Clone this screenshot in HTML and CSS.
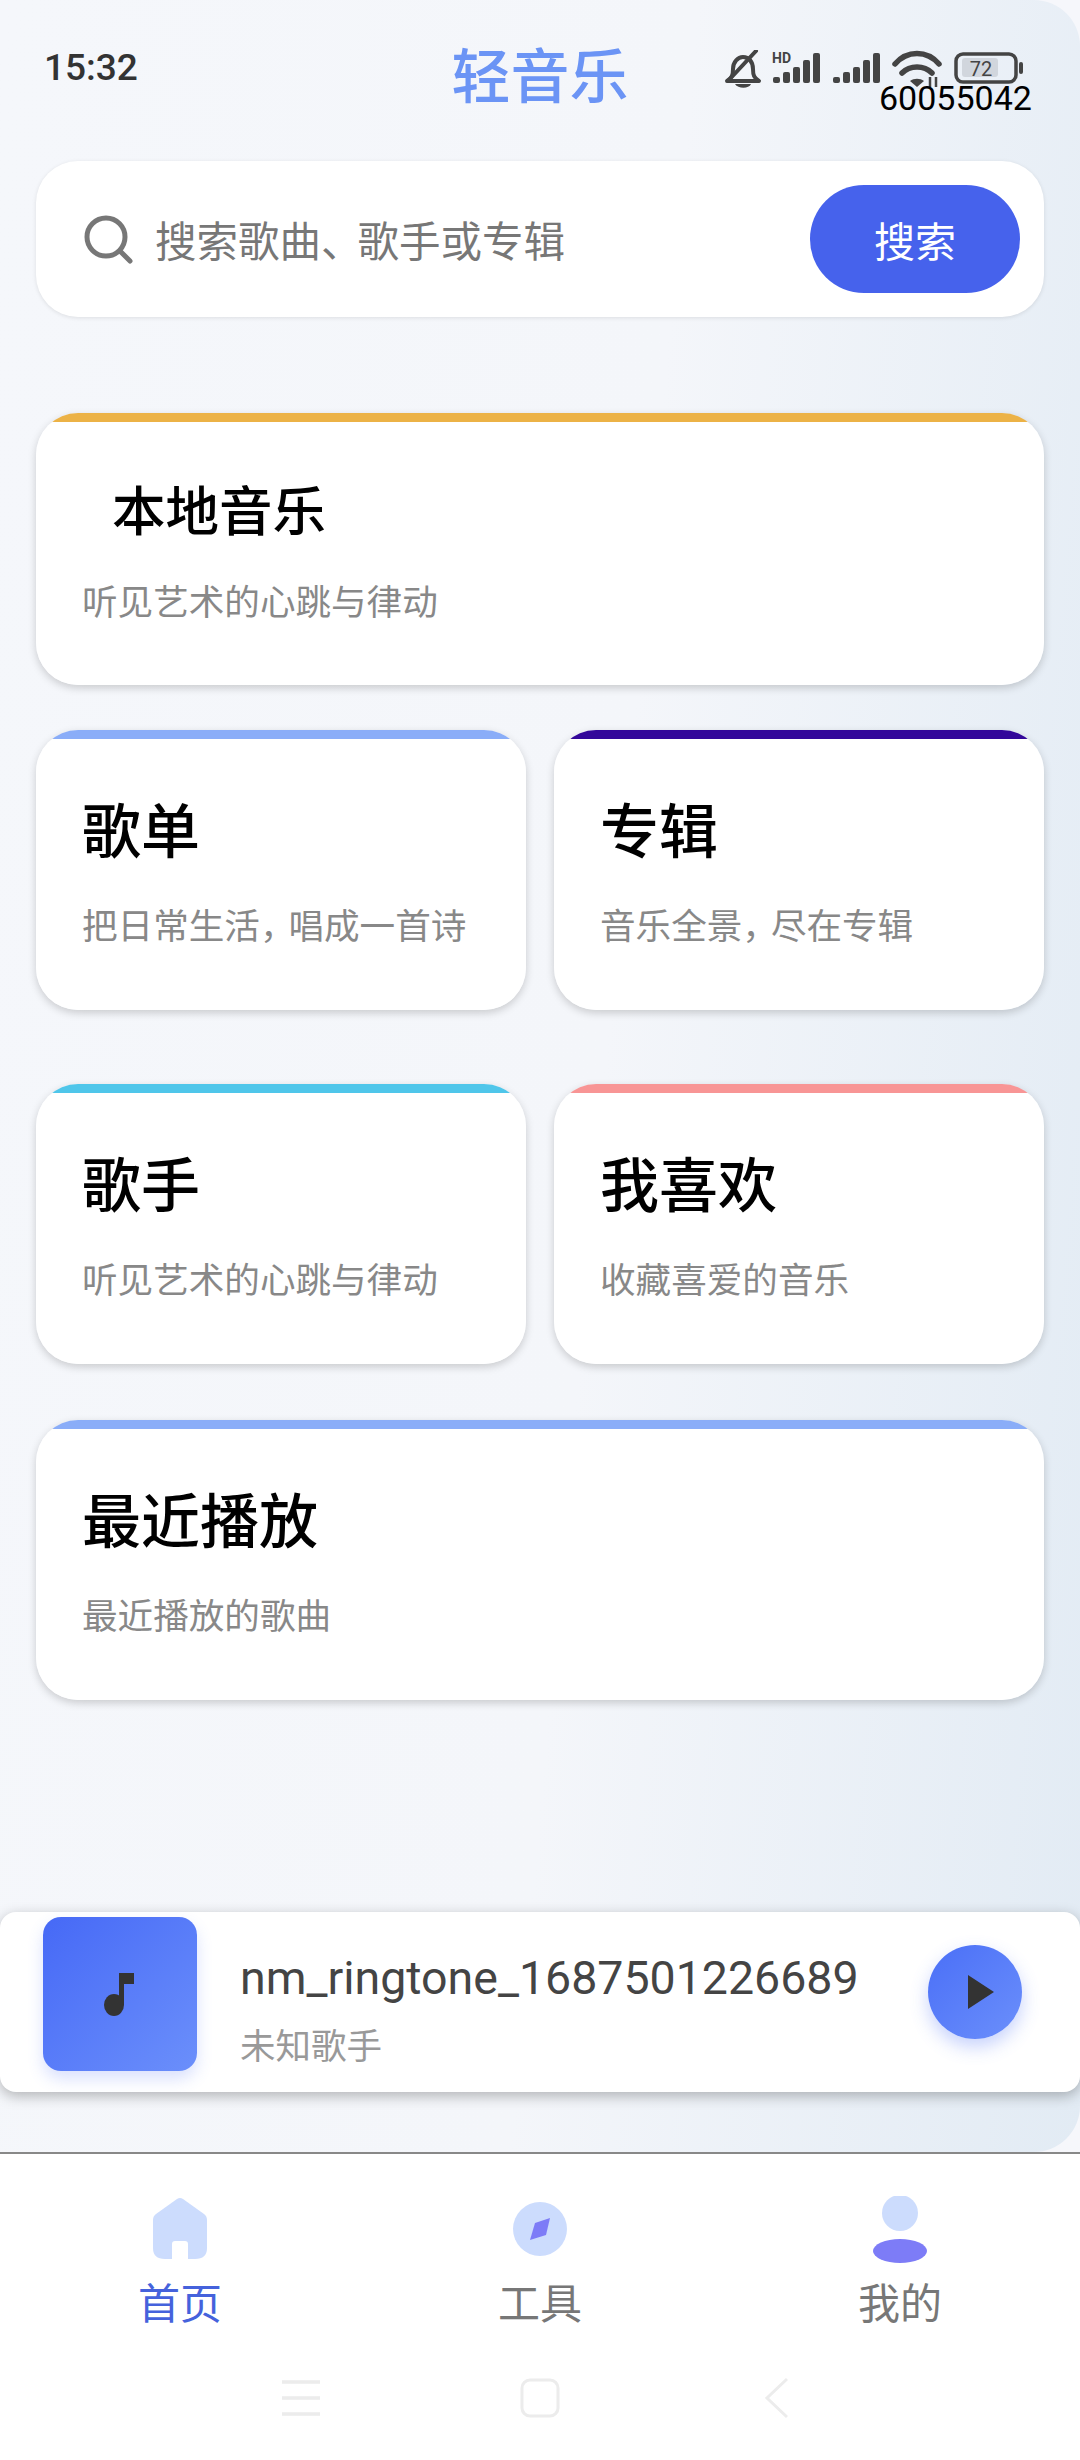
FILE: index.html
```html
<!DOCTYPE html>
<html lang="zh-CN">
<head>
  <meta charset="UTF-8" />
  <meta name="viewport" content="width=device-width, initial-scale=1.0"/>
  <title>轻音乐</title>
  <link rel="stylesheet" href="styles.css">
</head>
<body>

  <div class="page">
    <div class="page-inner">
      <!-- System status bar, sits over the header -->
      <div class="status-bar">
        <span class="status-time">15:32</span>
        <svg class="status-icons" width="310" height="50" viewBox="0 0 310 50">
          <g fill="none" stroke="#444" stroke-width="4" stroke-linecap="round">
            <path d="M2 31 c5 -3 6 -6 6 -12 c0 -7 5 -12 10 -12 c6 0 10 5 10 12 c0 6 1 9 6 12 z" stroke-linejoin="round"/>
            <path d="M3 31 L31 1"/>
          </g>
          <path d="M10 34 h16 c-2 5 -13 5 -16 0 z" fill="#444"/>
          <text class="status-hd" x="47" y="13">HD</text>
          <g fill="#444">
            <rect x="48" y="27" width="7" height="6" rx="2"/>
            <rect x="58" y="22" width="7" height="11" rx="2"/>
            <rect x="68" y="17" width="7" height="16" rx="2"/>
            <rect x="78" y="10" width="7" height="23" rx="2"/>
            <rect x="88" y="3" width="7" height="30" rx="2"/>
            <rect x="108" y="27" width="7" height="6" rx="2"/>
            <rect x="118" y="22" width="7" height="11" rx="2"/>
            <rect x="128" y="17" width="7" height="16" rx="2"/>
            <rect x="138" y="10" width="7" height="23" rx="2"/>
            <rect x="148" y="3" width="7" height="30" rx="2"/>
          </g>
          <g fill="none" stroke="#444" stroke-width="5.500" stroke-linecap="round">
            <path d="M170 14 c12 -14 32 -14 44 0"/>
            <path d="M177 23 c8 -8 22 -8 30 0"/>
          </g>
          <path d="M185 31 c4 -3 10 -3 14 0 l-7 6 z" fill="#444"/>
          <path d="M205 27 v10 M211 27 v10" stroke="#444" stroke-width="2.500"/>
          <rect x="231" y="4" width="60" height="28" rx="7" fill="none" stroke="#444" stroke-width="3.500"/>
          <rect x="237" y="8" width="36" height="19" rx="3" fill="#d1d6dd"/>
          <text class="status-battery" x="256" y="26" text-anchor="middle">72</text>
          <rect x="294" y="12" width="4" height="12" rx="2" fill="#444"/>
        </svg>
        <span class="status-code">60055042</span>
      </div>

      <header class="app-title">轻音乐</header>

      <main class="content">
        <div class="search-box">
          <svg class="search-icon" width="50" height="50" viewBox="0 0 50 50">
            <circle cx="22" cy="23" r="19" fill="none" stroke="#777" stroke-width="5"/>
            <path d="M36 37 L46 47" fill="none" stroke="#777" stroke-width="5" stroke-linecap="round"/>
          </svg>
          <span class="search-hint">搜索歌曲<span class="pause-mark">、</span>歌手或专辑</span>
          <button class="search-btn">搜索</button>
        </div>

        <section class="card card-local">
          <div class="card-title">本地音乐</div>
          <div class="card-desc">听见艺术的心跳与律动</div>
        </section>

        <div class="card-row row-first">
          <section class="card card-playlist">
            <div class="card-title">歌单</div>
            <div class="card-desc">把日常生活<span class="comma">，</span>唱成一首诗</div>
          </section>
          <section class="card card-album">
            <div class="card-title">专辑</div>
            <div class="card-desc">音乐全景<span class="comma">，</span>尽在专辑</div>
          </section>
        </div>

        <div class="card-row row-second">
          <section class="card card-singer">
            <div class="card-title">歌手</div>
            <div class="card-desc">听见艺术的心跳与律动</div>
          </section>
          <section class="card card-like">
            <div class="card-title">我喜欢</div>
            <div class="card-desc">收藏喜爱的音乐</div>
          </section>
        </div>

        <section class="card card-recent">
          <div class="card-title">最近播放</div>
          <div class="card-desc">最近播放的歌曲</div>
        </section>
      </main>

      <!-- Mini player -->
      <div class="player">
        <div class="player-cover">
          <svg width="32" height="46" viewBox="0 0 32 46">
            <ellipse cx="10" cy="34" rx="10" ry="11" fill="#333"/>
            <path d="M15 34 V2 H30 V13 H20 V34 z" fill="#333"/>
          </svg>
        </div>
        <div class="player-info">
          <div class="player-name">nm_ringtone_1687501226689</div>
          <div class="player-artist">未知歌手</div>
        </div>
        <button class="player-btn">
          <svg width="28" height="34" viewBox="0 0 28 34"><path d="M1 0 L27 17 L1 34 z" fill="#333"/></svg>
        </button>
      </div>
    </div>
  </div>

  <nav class="tabbar">
    <div class="tabs">
      <div class="tab tab-active">
        <svg width="64" height="70" viewBox="0 0 64 70">
          <path d="M29 3 Q32 1 35 3 L56 18 Q59 20 59 24 V52 Q59 63 47 63 H40 V48 Q40 45 37 45 H27 Q24 45 24 48 V63 H17 Q5 63 5 52 V24 Q5 20 8 18 z" fill="#ccdcfd"/>
        </svg>
        <span class="tab-label">首页</span>
      </div>
      <div class="tab">
        <svg width="64" height="70" viewBox="0 0 64 70">
          <circle cx="32" cy="33" r="27" fill="#ccdcfd"/>
          <path d="M42 22 L38 39 L22 44 L27 27 z" fill="#7d7cf7"/>
        </svg>
        <span class="tab-label">工具</span>
      </div>
      <div class="tab">
        <svg width="64" height="70" viewBox="0 0 64 70">
          <circle cx="32" cy="17" r="18" fill="#ccdcfd"/>
          <ellipse cx="32" cy="55" rx="27" ry="12" fill="#7d7cf7"/>
        </svg>
        <span class="tab-label">我的</span>
      </div>
    </div>

    <div class="gesture-bar">
      <svg width="40" height="36" viewBox="0 0 40 36">
        <path d="M1 2 H39 M1 18 H39 M1 34 H39" fill="none" stroke="#ececec" stroke-width="3.500"/>
      </svg>
      <svg width="40" height="40" viewBox="0 0 40 40">
        <rect x="2" y="2" width="36" height="36" rx="8" fill="none" stroke="#ececec" stroke-width="3"/>
      </svg>
      <svg class="gesture-back" width="24" height="42" viewBox="0 0 24 42">
        <path d="M23 2 L3 21 L23 40" fill="none" stroke="#ececec" stroke-width="3"/>
      </svg>
    </div>
  </nav>

</body>
</html>
```

FILE: styles.css
```css
* {
  box-sizing: border-box;
  margin: 0;
  padding: 0;
  font-family: Roboto, "Noto Sans CJK SC", sans-serif;
}

body {
  background-color: #fff;
  width: 1080px;
  height: 2460px;
  overflow: hidden;
}

.page {
  height: 2152px;
  background-color: #f6f7fb;
}

.page-inner {
  position: relative;
  height: 100%;
  background: linear-gradient(95deg, #f5f7fb 0%, #f4f6fa 55%, #e2ebf4 100%);
  border-radius: 0 46px 46px 0;
}

/* Status bar */
.status-bar {
  position: absolute;
  top: 0;
  left: 0;
  width: 100%;
  height: 120px;
}

.status-time {
  position: absolute;
  left: 44px;
  top: 46px;
  font-size: 37px;
  font-weight: 500;
  line-height: 44px;
  color: #333;
}

.status-icons {
  position: absolute;
  left: 725px;
  top: 50px;
}

.status-hd {
  font-size: 14px;
  font-weight: 700;
  fill: #444;
}

.status-battery {
  font-size: 20px;
  fill: #444;
}

.status-code {
  position: absolute;
  left: 879px;
  top: 78px;
  font-size: 34px;
  line-height: 40px;
  color: #000;
}

/* Header */
.app-title {
  height: 161px;
  padding-top: 38px;
  text-align: center;
  font-size: 59px;
  line-height: 80px;
  font-weight: 500;
  color: #6b94f5;
}

.content {
  padding: 0 36px;
}

/* Search */
.search-box {
  display: flex;
  align-items: center;
  height: 156px;
  padding: 0 24px 0 48px;
  background: #fff;
  border-radius: 42px;
  box-shadow: 0 1px 4px rgba(0, 0, 0, 0.1);
}

.search-icon {
  flex-shrink: 0;
}

.search-hint {
  flex: 1;
  margin-left: 21px;
  font-size: 41.500px;
  color: #777;
}

.pause-mark {
  letter-spacing: -5px;
}

.search-btn {
  width: 210px;
  height: 108px;
  border: none;
  border-radius: 54px;
  background-color: #4662ec;
  color: #fff;
  font-size: 41px;
}

/* Feature cards */
.card {
  --accent: #8aadf8;
  height: 280px;
  padding: 67px 20px 0 46px;
  background: linear-gradient(var(--accent) 9px, #fff 9px);
  border-radius: 42px;
  box-shadow: 0 3px 8px rgba(0, 0, 0, 0.18);
}

.card-title {
  font-size: 59px;
  line-height: 72px;
  font-weight: 500;
  color: #000;
}

.card-desc {
  margin-top: 34px;
  font-size: 35.600px;
  line-height: 48px;
  color: #888;
}

.comma {
  letter-spacing: -7px;
}

.card-local {
  --accent: #ecb246;
  height: 272px;
  margin-top: 96px;
  padding-top: 64px;
}

.card-local .card-title {
  padding-left: 30px;
  font-size: 53.500px;
}

.card-local .card-desc {
  margin-top: 30px;
}

.card-row {
  display: grid;
  grid-template-columns: 490px 490px;
  gap: 28px;
}

.row-first {
  margin-top: 45px;
}

.row-second {
  margin-top: 74px;
}

.card-album {
  --accent: #33079a;
}

.card-singer {
  --accent: #4fc6ea;
}

.card-like {
  --accent: #f89595;
}

.card-recent {
  margin-top: 56px;
}

/* Mini player */
.player {
  display: flex;
  align-items: flex-start;
  height: 180px;
  margin-top: 212px;
  padding: 5px 58px 0 43px;
  background: #fff;
  border-radius: 16px;
  box-shadow: 0 4px 14px rgba(0, 0, 0, 0.28);
}

.player-cover {
  display: flex;
  align-items: center;
  justify-content: center;
  flex-shrink: 0;
  width: 154px;
  height: 154px;
  border-radius: 18px;
  background: linear-gradient(135deg, #4669f6, #6b8ffb);
  box-shadow: 0 8px 16px rgba(70, 105, 246, 0.2);
}

.player-info {
  flex: 1;
  margin-left: 43px;
  padding-top: 31px;
}

.player-name {
  font-size: 46.500px;
  line-height: 60px;
  color: #444;
}

.player-artist {
  margin-top: 17px;
  font-size: 35.500px;
  line-height: 44px;
  color: #999;
}

.player-btn {
  display: flex;
  align-items: center;
  justify-content: center;
  width: 94px;
  height: 94px;
  margin-top: 28px;
  padding-left: 11px;
  border: none;
  border-radius: 50%;
  background: linear-gradient(135deg, #4a6ff7, #6b8ffb);
  box-shadow: 0 8px 18px rgba(70, 105, 246, 0.3);
}

/* Bottom navigation */
.tabbar {
  height: 308px;
  background: #fff;
  border-top: 2px solid #888;
}

.tabs {
  display: grid;
  grid-template-columns: repeat(3, 360px);
  padding-top: 42px;
}

.tab {
  display: flex;
  flex-direction: column;
  align-items: center;
}

.tab-label {
  margin-top: 11px;
  font-size: 42px;
  line-height: 56px;
  color: #777;
}

.tab-active .tab-label {
  color: #4562dc;
}

.gesture-bar {
  display: flex;
  align-items: center;
  gap: 199px;
  margin-top: 44px;
  padding-left: 281px;
}

.gesture-back {
  margin-left: 5px;
}
```
